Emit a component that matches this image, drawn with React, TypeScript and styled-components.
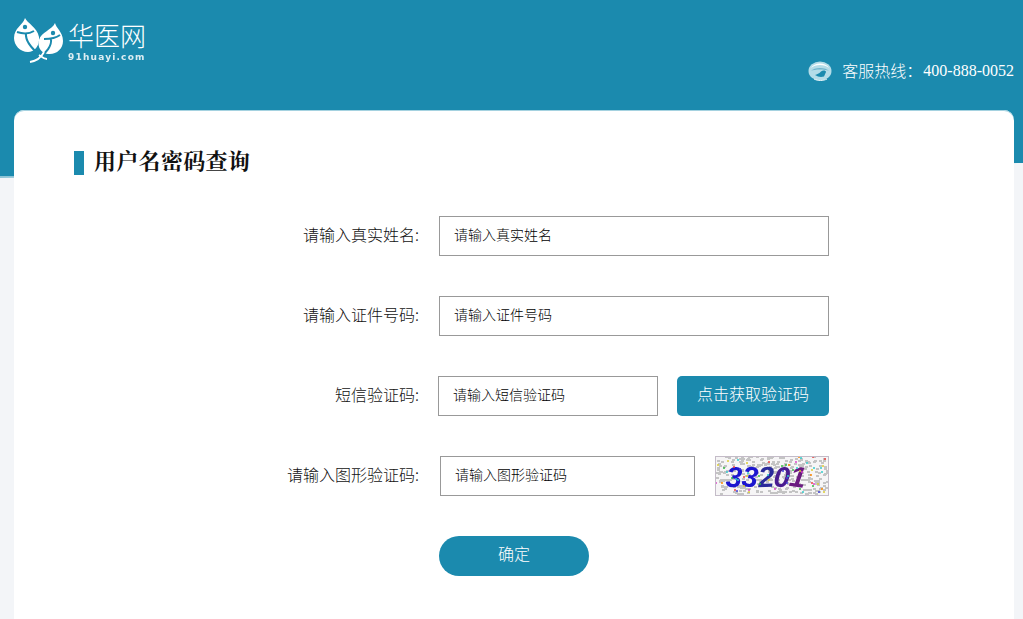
import styled, { createGlobalStyle } from 'styled-components';

const GlobalStyle = createGlobalStyle`
  html, body {
    margin: 0;
    padding: 0;
    background: #f3f5f8;
    overflow: hidden;
  }
  * {
    box-sizing: border-box;
  }
`;

const Page = styled.div`
  height: 619px;
  overflow: hidden;
  font-family: 'Noto Sans CJK SC', 'Liberation Sans', sans-serif;
  font-weight: 300;
`;

const HeaderBand = styled.div`
  height: 178px;
  margin-bottom: -68px;
  padding: 14px 9px 0 14px;
  background: linear-gradient(#1b8aae 176px, #8cc4d6 176px);
  clip-path: polygon(0 0, 100% 0, 100% 163px, 0 178px);
  display: flex;
  justify-content: space-between;
  align-items: flex-start;
`;

const Logo = styled.div`
  display: flex;
  align-items: flex-start;
  gap: 4px;
`;

const LogoText = styled.div`
  display: flex;
  flex-direction: column;
  color: #fff;
`;

const LogoName = styled.div`
  font-size: 26px;
  line-height: 30px;
  font-weight: 300;
  margin-top: 6px;
`;

const LogoDomain = styled.div`
  font-family: 'DejaVu Sans', sans-serif;
  font-size: 9px;
  line-height: 10px;
  font-weight: 700;
  letter-spacing: 1.2px;
  margin-top: 2px;
  opacity: 0.85;
`;

const Hotline = styled.div`
  display: flex;
  align-items: center;
  margin-top: 44px;
  color: #fff;
  font-size: 16px;
  line-height: 26px;
`;

const HotlineLabel = styled.span`
  margin: -3px 1px 0 10px;
`;

const HotlineNumber = styled.span`
  font-family: 'Liberation Serif', serif;
`;

const Card = styled.main`
  position: relative;
  width: 1000px;
  height: 520px;
  margin-left: 14px;
  padding-top: 41px;
  background: #fff;
  border-radius: 10px;
  box-shadow: inset 0 1px 0 #a5d2e0;
`;

const Title = styled.h1`
  display: flex;
  align-items: center;
  gap: 10px;
  height: 24px;
  margin: 0 0 41px 60px;
  color: #111;
  font-family: 'Noto Serif CJK SC', 'Noto Sans CJK SC', serif;
  font-size: 22px;
  line-height: 24px;
  font-weight: 700;
  letter-spacing: 0.3px;
`;

const TitleMark = styled.span`
  width: 10px;
  height: 24px;
  background: #1b8aae;
`;

const TitleText = styled.span`
  margin-bottom: 6px;
`;

const Row = styled.div`
  display: flex;
  align-items: center;
  height: 40px;
  margin-bottom: 40px;
`;

const Label = styled.label`
  flex: none;
  width: 405px;
  height: 40px;
  padding-bottom: 4px;
  text-align: right;
  color: #111;
  font-size: 16px;
  line-height: 36px;
`;

const Input = styled.input<{ $width: number; $offset: number }>`
  width: ${(p) => p.$width}px;
  height: 40px;
  margin-left: ${(p) => p.$offset}px;
  padding: 0 15px 4px 14px;
  border: 1px solid #999;
  outline: none;
  background: #fff;
  color: #111;
  font-family: inherit;
  font-size: 14px;
  font-weight: 300;
  &::placeholder {
    color: #000;
    opacity: 1;
  }
`;

const SmsButton = styled.button`
  width: 152px;
  height: 40px;
  margin-left: 19px;
  padding: 0 0 6px;
  border: none;
  border-radius: 5px;
  background: #1b8aae;
  color: #fff;
  font-family: inherit;
  font-size: 16px;
  font-weight: 300;
`;

const Captcha = styled.svg`
  display: block;
  width: 114px;
  height: 40px;
  margin-left: 20px;
`;

const SubmitRow = styled.div`
  padding-left: 425px;
`;

const SubmitButton = styled.button`
  width: 150px;
  height: 40px;
  padding: 0 0 7px;
  border: none;
  border-radius: 20px;
  background: #1b8aae;
  color: #fff;
  font-family: inherit;
  font-size: 16px;
  font-weight: 300;
`;

function LogoMark() {
  return (
    <svg width="50" height="50" viewBox="0 0 50 50">
      <path d="M11 4 C 13 9 23 13 25 23 C 26 32 20 38 14 38 C 6 38 0 31 0 24 C 0 14 9 11 11 4 Z" fill="#fff" />
      <path d="M41 9 C 42 14 49 18 49 27 C 49 35 42 41 34 40 C 27 39 23 33 25 26 C 27 18 38 16 41 9 Z" fill="#fff" />
      <circle cx="11" cy="13" r="2.2" fill="#1b8aae" />
      <circle cx="39" cy="19" r="2.2" fill="#1b8aae" />
      <path d="M3 18 C 9 20 15 20 20 17 M12 19 C 11 27 18 35 27 42" stroke="#1b8aae" strokeWidth="2" fill="none" />
      <path d="M30 25 C 36 25 42 24 46 21 M37 25 C 38 32 32 39 26 43" stroke="#1b8aae" strokeWidth="2" fill="none" />
      <path d="M16 48 C 22 47 27 44 30 38 M25 41 C 28 43 30 45 33 45" stroke="#fff" strokeWidth="1.8" fill="none" />
    </svg>
  );
}

function HeadsetIcon() {
  return (
    <svg width="24" height="20" viewBox="0 0 24 20">
      <ellipse cx="12" cy="10" rx="11.5" ry="9.5" fill="#b4dce8" />
      <path d="M3 7 C 6 1 18 1 21 7 C 17 3 7 3 3 7 Z" fill="#ffffff" />
      <path d="M3 10 C 6 6 18 6 21 10 C 18 8 6 8 3 10 Z" fill="#6fb4cc" />
      <path d="M7 14 C 9 13 11 13 13 10.5 C 15 9 18 9.5 18 11 L 16 15.5 C 13 16.5 10 16 7 14 Z" fill="#1b8aae" />
      <path d="M6 18 C 10 20 15 20 19 18" stroke="#e6f4f8" strokeWidth="1" fill="none" />
    </svg>
  );
}

// noise for the captcha picture, fixed seed so it doesn't change between runs
const noiseColors = ['#e44', '#3b4', '#44d', '#dc3', '#3cc', '#d4c', '#f80'];
let seed = 7;
const rand = (max: number) => {
  seed = (seed * 16807) % 2147483647;
  return seed % max;
};
const greyBits = Array.from({ length: 320 }, () => ({ x: rand(112), y: rand(38) }));
const dots = Array.from({ length: 60 }, () => ({
  x: rand(111),
  y: rand(37),
  c: noiseColors[rand(noiseColors.length)],
}));

const digits = [
  { ch: '3', x: 11, c: '#1d14cf', r: 4 },
  { ch: '3', x: 27, c: '#1d14cf', r: 6 },
  { ch: '2', x: 43, c: '#2a2a9a', r: -2 },
  { ch: '0', x: 59, c: '#4a1a90', r: 5 },
  { ch: '1', x: 75, c: '#6a1a80', r: 8 },
];

function CaptchaImage() {
  return (
    <Captcha viewBox="0 0 114 40">
      <defs>
        <filter id="soft">
          <feGaussianBlur stdDeviation="0.45" />
        </filter>
      </defs>
      <rect width="114" height="40" fill="#f6f5f6" />
      <g filter="url(#soft)">
        {greyBits.map((d, i) => (
          <rect key={i} x={d.x} y={d.y} width="3" height="2" fill="#c4c4c4" />
        ))}
        {digits.map((d, i) => (
          <text
            key={i}
            x={d.x}
            y={31}
            transform={`rotate(${d.r} ${d.x + 8} 20)`}
            fontFamily="'Liberation Sans', sans-serif"
            fontStyle="italic"
            fontWeight="700"
            fontSize="29"
            fill={d.c}
          >
            {d.ch}
          </text>
        ))}
      </g>
      {dots.map((d, i) => (
        <circle key={i} cx={d.x} cy={d.y} r="1" fill={d.c} />
      ))}
      <rect x="0.5" y="0.5" width="113" height="39" fill="none" stroke="#c4bcc8" />
    </Captcha>
  );
}

export default function App() {
  return (
    <Page>
      <GlobalStyle />
      <HeaderBand>
        <Logo>
          <LogoMark />
          <LogoText>
            <LogoName>华医网</LogoName>
            <LogoDomain>91huayi.com</LogoDomain>
          </LogoText>
        </Logo>
        <Hotline>
          <HeadsetIcon />
          <HotlineLabel>客服热线：</HotlineLabel>
          <HotlineNumber>400-888-0052</HotlineNumber>
        </Hotline>
      </HeaderBand>
      <Card>
        <Title>
          <TitleMark />
          <TitleText>用户名密码查询</TitleText>
        </Title>
        <Row>
          <Label>请输入真实姓名:</Label>
          <Input $width={390} $offset={20} placeholder="请输入真实姓名" />
        </Row>
        <Row>
          <Label>请输入证件号码:</Label>
          <Input $width={390} $offset={20} placeholder="请输入证件号码" />
        </Row>
        <Row>
          <Label>短信验证码:</Label>
          <Input $width={220} $offset={19} placeholder="请输入短信验证码" />
          <SmsButton>点击获取验证码</SmsButton>
        </Row>
        <Row>
          <Label>请输入图形验证码:</Label>
          <Input $width={255} $offset={21} placeholder="请输入图形验证码" />
          <CaptchaImage />
        </Row>
        <SubmitRow>
          <SubmitButton>确定</SubmitButton>
        </SubmitRow>
      </Card>
    </Page>
  );
}
